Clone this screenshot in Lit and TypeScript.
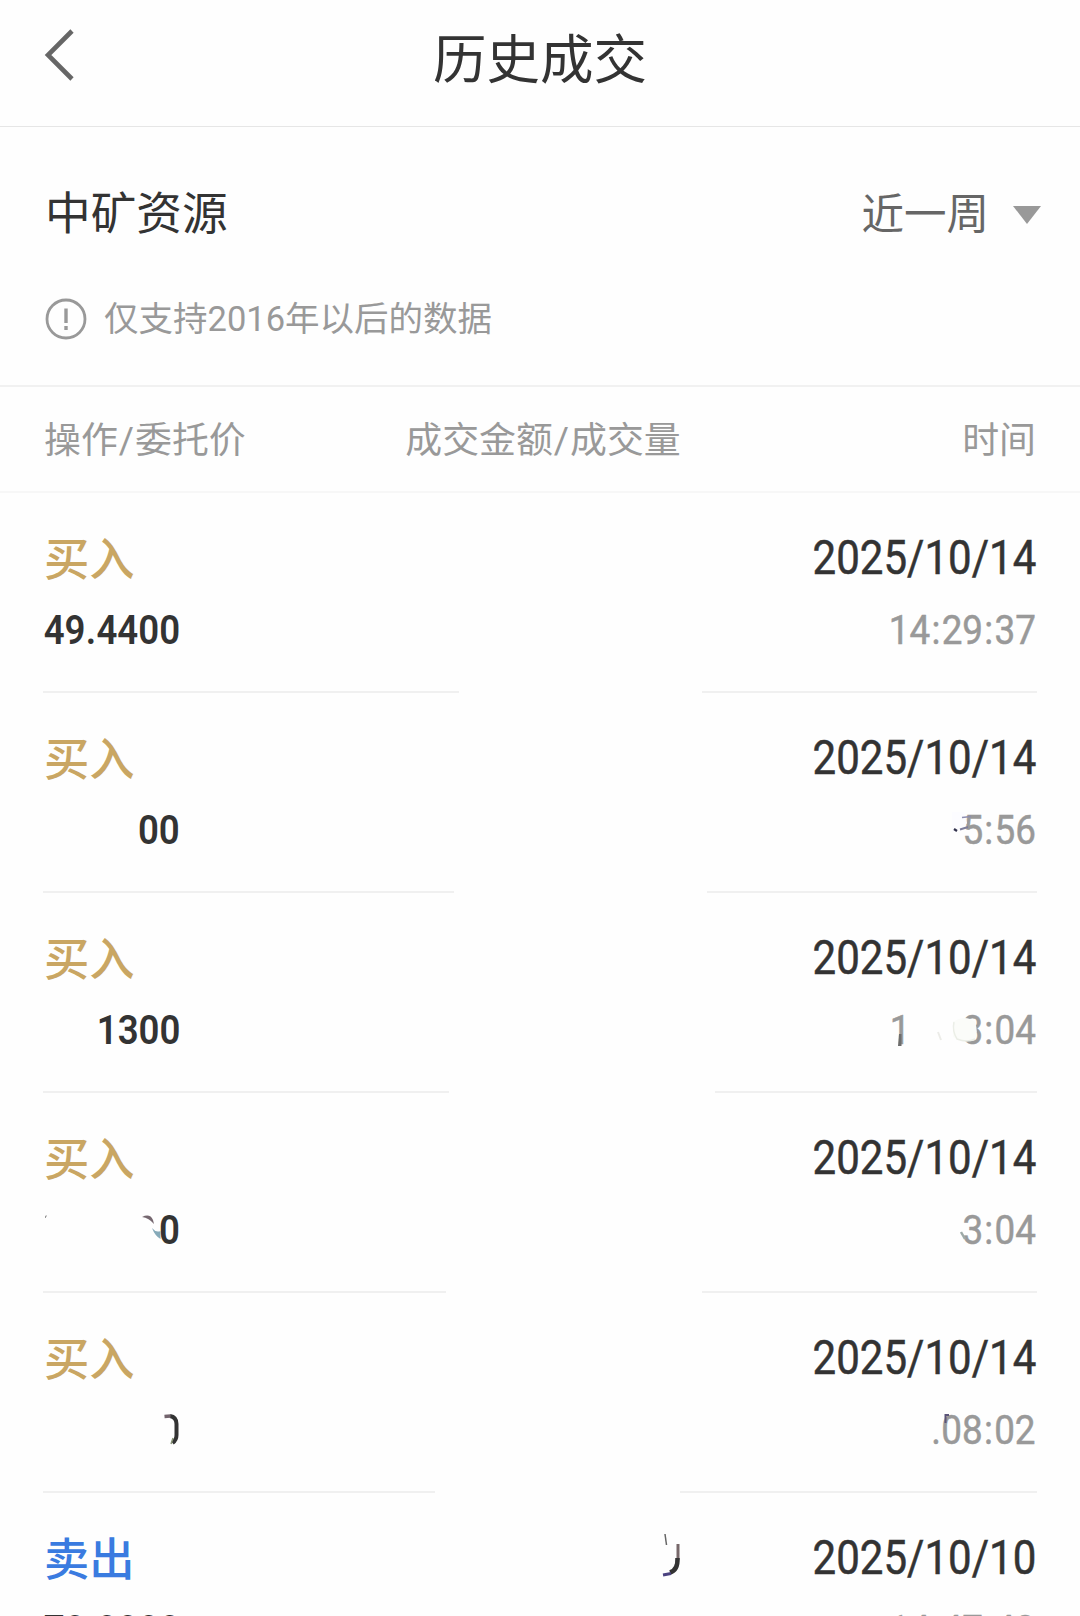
import { LitElement, html, svg, css, nothing } from "lit";
import { customElement, property } from "lit/decorators.js";

interface Trade {
  side: "buy" | "sell";
  price: string;
  date: string;
  time: string;
  lead?: string;
  lineFrom?: number;
  lineTo?: number;
}

const TRADES: Trade[] = [
  { side: "buy", price: "49.4400", date: "2025/10/14", time: "14:29:37", lineFrom: 459, lineTo: 702 },
  { side: "buy", price: "00", date: "2025/10/14", time: "5:56", lineFrom: 454, lineTo: 707 },
  { side: "buy", price: "1300", date: "2025/10/14", time: "3:04", lead: "1", lineFrom: 449, lineTo: 715 },
  { side: "buy", price: "0", date: "2025/10/14", time: "3:04", lineFrom: 446, lineTo: 702 },
  { side: "buy", price: "0", date: "2025/10/14", time: ".08:02", lineFrom: 435, lineTo: 680 },
  { side: "sell", price: "70.0000", date: "2025/10/10", time: "14:47:43" },
];

/** Narrow figures, aligned to the right edge of their column. */
@customElement("trade-figures")
export class TradeFigures extends LitElement {
  @property() value = "";
  static styles = css`
    :host { display: inline-flex; transform: scaleX(var(--squeeze, 0.92)); transform-origin: 100% 50%; white-space: nowrap; }
    .colon { margin: 0 1.4px; }
    .dot { margin: 0 0.3px; }
  `;
  render() {
    return this.value
      .split(/([:.])/)
      .filter((part) => part)
      .map((part) => html`<span class=${part === ":" ? "colon" : part === "." ? "dot" : "run"}>${part}</span>`);
  }
}

@customElement("app-root")
export class AppRoot extends LitElement {
  static styles = css`
    :host {
      display: block;
      width: 1080px;
      height: 1616px;
      overflow: hidden;
      background: #fefefe;
      color: #333;
      font-family: Roboto, "Noto Sans CJK SC", sans-serif;
    }
    .page { position: relative; height: 1616px; overflow: hidden; display: flex; flex-direction: column; }
    .bar {
      box-sizing: border-box;
      flex: none;
      height: 127px;
      padding: 0 44px 12px;
      border-bottom: 1px solid #e6e6e6;
      display: grid;
      grid-template-columns: 100px 1fr 100px;
      align-items: center;
    }
    .back { display: block; width: 34px; height: 54px; margin-top: -4px; }
    .title { margin: 8px 0 0; text-align: center; font-size: 53.5px; line-height: 60px; font-weight: 400; }
    .filter {
      box-sizing: border-box;
      flex: none;
      height: 260px;
      padding: 58px 39px 0 45px;
      border-bottom: 2px solid #f1f1f1;
    }
    .pick { display: flex; justify-content: space-between; align-items: center; height: 60px; }
    .stock { font-size: 45.7px; line-height: 60px; }
    .range { display: flex; align-items: center; gap: 24px; font-size: 42.5px; line-height: 60px; color: #666; }
    .caret { display: block; width: 28px; height: 18px; margin-top: -1px; }
    .note { display: flex; align-items: center; gap: 17px; margin-top: 49px; height: 50px; font-size: 34.5px; color: #999; }
    .note span { margin-top: -6px; }
    .mark { display: block; width: 42px; height: 42px; }
    .heads {
      box-sizing: border-box;
      flex: none;
      height: 106px;
      padding: 0 44px 5px;
      border-bottom: 2px solid #f7f7f7;
      display: grid;
      grid-template-columns: 300px 1fr 300px;
      align-items: center;
      font-size: 36.9px;
      color: #999;
    }
    .slash { margin: 0 1px; }
    .mid { text-align: center; padding-left: 6px; }
    .end { text-align: right; }
    .row {
      box-sizing: border-box;
      flex: none;
      height: 200px;
      padding: 34px 44px 0 43px;
      display: flex;
      flex-direction: column;
      position: relative;
    }
    .line { display: flex; justify-content: space-between; align-items: center; height: 64px; }
    .sub { margin-top: 7px; font-size: 40px; }
    .side { font-size: 45.3px; line-height: 64px; font-weight: 500; margin: 3px 0 0 1px; }
    .buy { color: #c9a663; }
    .sell { color: #3a7be0; }
    .date { --squeeze: 0.88; font-size: 47.8px; -webkit-text-stroke: 0.5px #333; margin-top: -3px; }
    .price { --squeeze: 0.915; display: flex; justify-content: flex-end; width: 137px; font-weight: 600; }
    .clock { display: flex; justify-content: flex-end; gap: 46px; color: #999; -webkit-text-stroke: 0.5px #999; }
    .rule { display: flex; justify-content: space-between; margin: auto -1px 0 0; height: 2px; }
    .rule i { display: block; height: 2px; background: #f0f0f0; }
    .smudges { position: absolute; left: 0; top: 0; width: 1080px; height: 1616px; pointer-events: none; }
  `;

  private row(t: Trade) {
    return html`
      <section class="row">
        <div class="line">
          <span class="side ${t.side}">${t.side === "buy" ? "买入" : "卖出"}</span>
          <trade-figures class="date" .value=${t.date}></trade-figures>
        </div>
        <div class="line sub">
          <span class="price"><trade-figures .value=${t.price}></trade-figures></span>
          <span class="clock">
            ${t.lead ? html`<trade-figures .value=${t.lead}></trade-figures>` : nothing}
            <trade-figures .value=${t.time}></trade-figures>
          </span>
        </div>
        ${t.lineFrom
          ? html`<div class="rule">
              <i style="width:${t.lineFrom - 43}px"></i><i style="width:${1037 - t.lineTo!}px"></i>
            </div>`
          : nothing}
      </section>
    `;
  }

  private smudges() {
    return svg`
      <path d="M952 812 H964 L967 823 L962 830 L952 832 Z" fill="#fcfcff"/>
      <path d="M962 817.500 L971 816.500" stroke="#8d8daf" stroke-width="1.500"/>
      <path d="M954 829 L957 831" stroke="#33334d" stroke-width="2.200"/>
      <path d="M960 829.500 L968 827" stroke="#7d7d9c" stroke-width="2"/>

      <path d="M898 1046 L899 1034 H901.500 V1046 Z" fill="#6d6d6d"/>
      <path d="M953 1022 Q965 1014 975 1022 Q979 1034 974 1040 Q964 1043 953 1037 Z" fill="#fbfcf9"/>
      <path d="M954 1022 Q952 1031 957 1039 Q967 1043 975 1039" fill="none" stroke="#ebeee7" stroke-width="1.500"/>
      <path d="M938 1032 L941 1040" stroke="#ecece8" stroke-width="2"/>

      <path d="M45.500 1218 V1216 H47" fill="none" stroke="#999" stroke-width="1"/>
      <path d="M142 1217 Q150 1213 153 1220 L154 1224 Q149 1218 142 1217 Z" fill="#75676f"/>
      <path d="M152 1228 Q156 1233 160.500 1231 V1239 Q155 1236 152 1228 Z" fill="#86aab9"/>
      <path d="M961 1232 L965 1239" stroke="#9daaa8" stroke-width="2.500"/>

      <path d="M156 1406 H182 V1452 H156 Z" fill="#fefefe"/>
      <path d="M170 1416 Q176.500 1417 176.500 1424 V1435 Q176.500 1440 172.500 1443" fill="none" stroke="#333" stroke-width="4"/>
      <path d="M164.500 1416.500 L170.500 1416" stroke="#73646d" stroke-width="3.500"/>
      <path d="M171 1444 L173 1438" stroke="#8a9678" stroke-width="1.500"/>
      <path d="M945.500 1423 V1415 H949" fill="none" stroke="#5a5478" stroke-width="2"/>

      <path d="M665 1534 L666.500 1545" stroke="#666" stroke-width="1.500"/>
      <path d="M678 1544 V1560" stroke="#77686a" stroke-width="3"/>
      <path d="M677.500 1558 Q678 1570 670 1572.500" fill="none" stroke="#333" stroke-width="4.500"/>
      <path d="M663 1575 L671 1573.500" stroke="#4b4280" stroke-width="3"/>
    `;
  }

  render() {
    return html`
      <main class="page">
        <header class="bar">
          <svg class="back" viewBox="0 0 34 54" fill="none" stroke="#666" stroke-width="4.6">
            <path d="M28 3 L4 27 L28 51" />
          </svg>
          <h1 class="title">历史成交</h1>
        </header>
        <section class="filter">
          <div class="pick">
            <span class="stock">中矿资源</span>
            <span class="range">近一周<svg class="caret" viewBox="0 0 28 18"><path d="M0 0H28L14 18Z" fill="#999" /></svg></span>
          </div>
          <div class="note">
            <svg class="mark" viewBox="0 0 42 42" fill="none" stroke="#999" stroke-width="2.8">
              <circle cx="21" cy="21" r="19" />
              <path d="M21 10.500V25M21 28V32" stroke-width="3.4" />
            </svg>
            <span>仅支持2016年以后的数据</span>
          </div>
        </section>
        <div class="heads">
          <span>操作<span class="slash">/</span>委托价</span>
          <span class="mid">成交金额<span class="slash">/</span>成交量</span>
          <span class="end">时间</span>
        </div>
        ${TRADES.map((t) => this.row(t))}
        <svg class="smudges" viewBox="0 0 1080 1616">${this.smudges()}</svg>
      </main>
    `;
  }
}
